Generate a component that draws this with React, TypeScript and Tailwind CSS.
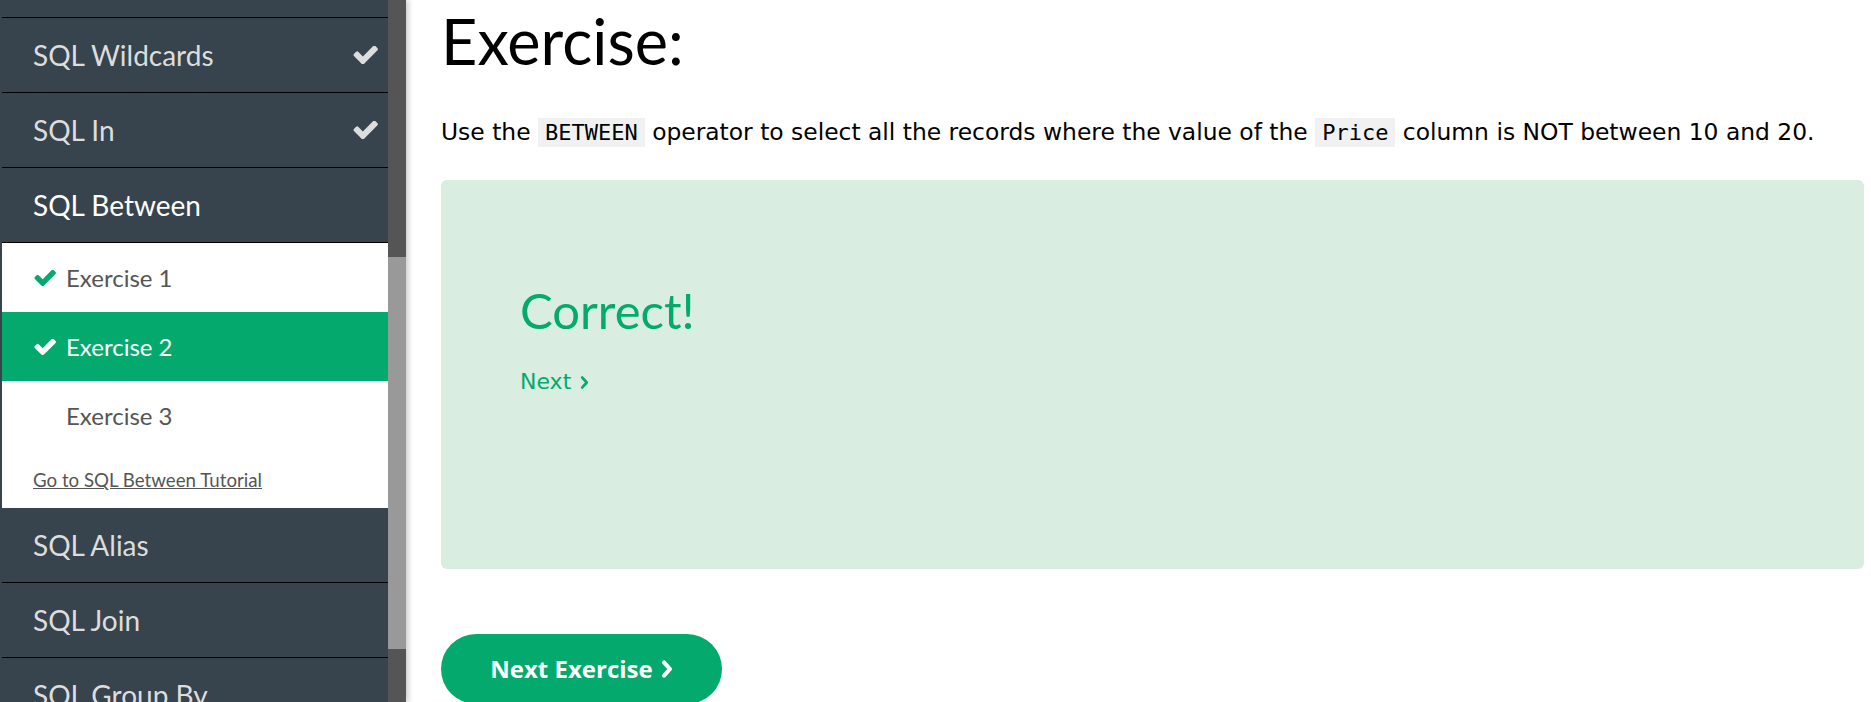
import React from "react";

const Check = ({ className }: { className?: string }) => (
  <svg viewBox="90 400 1585 1060" className={className} fill="currentColor">
    <path d="M1671 566q0 40-28 68l-724 724-136 136q-28 28-68 28t-68-28l-136-136-362-362q-28-28-28-68t28-68l136-136q28-28 68-28t68 28l294 295 656-657q28-28 68-28t68 28l136 136q28 28 28 68z" />
  </svg>
);

const Chevron = ({ className, w = 2.6 }: { className?: string; w?: number }) => (
  <svg viewBox="0 0 10 16" className={className} fill="none" stroke="currentColor" strokeWidth={w} strokeLinecap="round" strokeLinejoin="round">
    <polyline points="2.5,2.5 7.5,8 2.5,13.5" />
  </svg>
);

const TopicRow = ({ label, done, active }: { label: string; done?: boolean; active?: boolean }) => (
  <div className="h-[75px] shrink-0 border-b border-black flex items-center justify-between pl-[31px] pr-[10px]">
    <span className={`text-[28px] ${active ? "text-white" : "text-[#dddddd]"}`}>{label}</span>
    {done && <Check className="w-[25px] h-[18px] text-[#dddddd]" />}
  </div>
);

export default function App() {
  return (
    <div className="flex h-[702px] w-[1871px] overflow-hidden bg-white" style={{ fontFamily: "Lato, 'Open Sans', sans-serif" }}>
      <div className="relative z-10 flex shrink-0 h-[702px] shadow-[3px_0_5px_rgba(0,0,0,0.18)]">
        <div className="w-[388px] bg-[#38444d] pl-[2px] flex flex-col overflow-hidden">
          <div className="h-[18px] shrink-0 border-b border-black" />
          <TopicRow label="SQL Wildcards" done />
          <TopicRow label="SQL In" done />
          <TopicRow label="SQL Between" active />
          <div className="bg-white h-[265px] shrink-0 flex flex-col">
            <div className="h-[69px] shrink-0 flex items-center pl-[32px] text-[24px] text-[#555555]">
              <Check className="w-[22px] h-[16px] text-[#04AA6D] mr-[10px]" />
              <span>Exercise 1</span>
            </div>
            <div className="h-[69px] shrink-0 flex items-center pl-[32px] text-[24px] text-white bg-[#04AA6D]">
              <Check className="w-[22px] h-[16px] text-white mr-[10px]" />
              <span>Exercise 2</span>
            </div>
            <div className="h-[69px] shrink-0 flex items-center pl-[64px] text-[24px] text-[#555555]">
              <span>Exercise 3</span>
            </div>
            <div className="flex-1 flex items-center pl-[31px] pt-[2px]">
              <a className="text-[18.7px] text-[#555555] underline">Go to SQL Between Tutorial</a>
            </div>
          </div>
          <TopicRow label="SQL Alias" />
          <TopicRow label="SQL Join" />
          <TopicRow label="SQL Group By" />
        </div>
        <div className="w-[18px] flex flex-col">
          <div className="h-[257px] bg-[#555555]" />
          <div className="h-[392px] bg-[#999999]" />
          <div className="flex-1 bg-[#555555]" />
        </div>
      </div>
      <div className="flex-1 pl-[35px] pr-[7px]">
        <h1 className="mt-[9px] text-[63px] leading-none font-normal text-black">Exercise:</h1>
        <p className="mt-[46px] h-[28px] leading-[28px] text-[23.4px] text-black whitespace-nowrap" style={{ fontFamily: "'DejaVu Sans', Verdana, sans-serif" }}>
          Use the{" "}
          <code className="bg-[#f1f1f1] px-[7px] py-[2px] text-[22px]" style={{ fontFamily: "'DejaVu Sans Mono', monospace" }}>BETWEEN</code>{" "}
          operator to select all the records where the value of the{" "}
          <code className="bg-[#f1f1f1] px-[7px] py-[2px] text-[22px]" style={{ fontFamily: "'DejaVu Sans Mono', monospace" }}>Price</code>{" "}
          column is NOT between 10 and 20.
        </p>
        <div className="mt-[34px] h-[389px] rounded-[6px] bg-[#d9eee1] pl-[79px] pt-[106px]">
          <div className="text-[49px] leading-none text-[#04AA6D]">Correct!</div>
          <div className="mt-[36px] text-[22px] leading-none text-[#04AA6D] flex items-center gap-[9px]" style={{ fontFamily: "'DejaVu Sans', Verdana, sans-serif" }}>
            <span>Next</span>
            <Chevron className="w-[9px] h-[15px]" w={3} />
          </div>
        </div>
        <button className="mt-[65px] h-[70px] w-[281px] rounded-full bg-[#04AA6D] text-white text-[24px] font-bold flex items-center justify-center gap-[8px]" style={{ fontFamily: "'Open Sans', Lato, sans-serif" }}>
          <span>Next Exercise</span>
          <Chevron className="w-[12px] h-[20px]" w={3.4} />
        </button>
      </div>
    </div>
  );
}
